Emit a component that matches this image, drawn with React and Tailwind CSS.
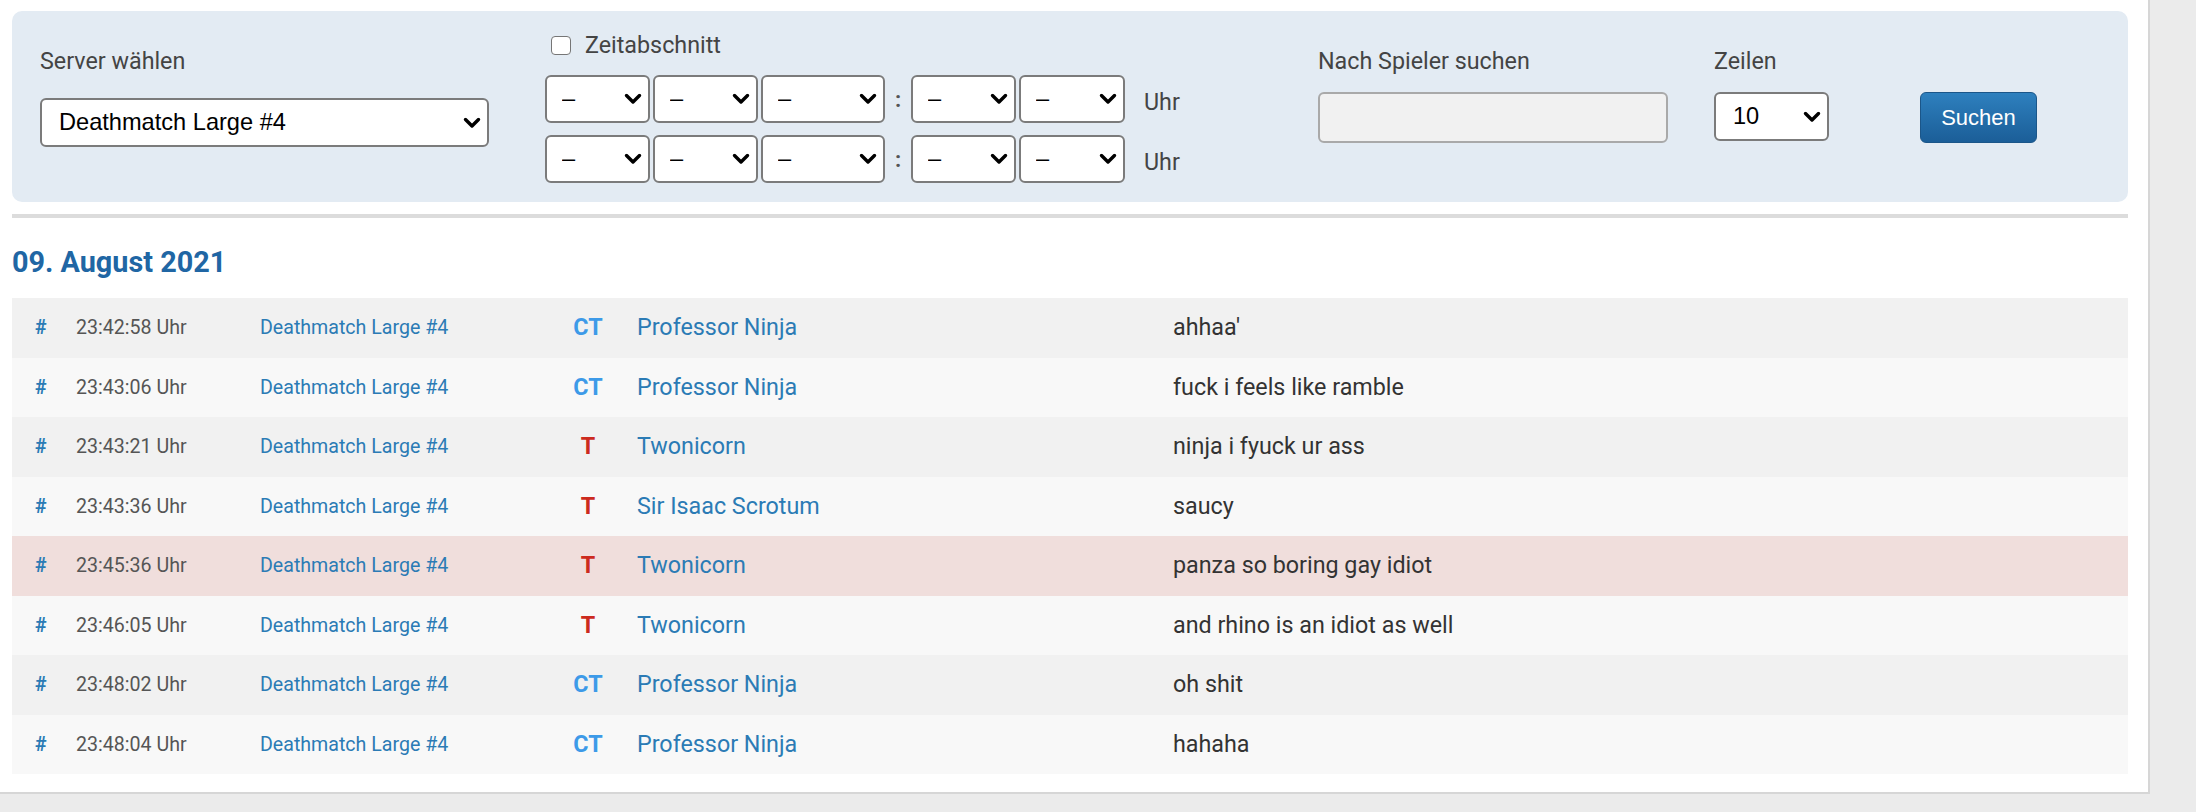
import React from "react";

const Chevron = () => (
  <svg
    className="pointer-events-none absolute right-[8px] top-1/2 -translate-y-1/2"
    width="18"
    height="11"
    viewBox="0 0 18 11"
  >
    <polyline
      points="2.5,2 9,8.5 15.5,2"
      fill="none"
      stroke="#000"
      strokeWidth="3.4"
      strokeLinecap="round"
      strokeLinejoin="round"
    />
  </svg>
);

function Select({ className, selClass, value, options }) {
  return (
    <div className={"relative " + className}>
      <select
        defaultValue={value}
        className={
          "h-full w-full appearance-none rounded-[6px] border-2 border-[#7b7b7b] bg-white pr-[30px] text-[23.6px] text-black outline-none font-['Liberation_Sans',Arial,sans-serif] " +
          selClass
        }
      >
        {options.map((o) => (
          <option key={o}>{o}</option>
        ))}
      </select>
      <Chevron />
    </div>
  );
}

function TimeRow() {
  const dash = ["–"];
  return (
    <div className="flex h-[48px] items-center">
      <Select className="h-full w-[105px]" selClass="pl-[15px]" value="–" options={dash} />
      <Select className="ml-[3px] h-full w-[105px]" selClass="pl-[15px]" value="–" options={dash} />
      <Select className="ml-[3px] h-full w-[124px]" selClass="pl-[15px]" value="–" options={dash} />
      <span className="w-[26px] text-center text-[22px] font-bold text-[#555]">:</span>
      <Select className="h-full w-[105px]" selClass="pl-[15px]" value="–" options={dash} />
      <Select className="ml-[3px] h-full w-[106px]" selClass="pl-[15px]" value="–" options={dash} />
      <span className="ml-[19px] pt-[6px] text-[23.3px] text-[#444]">Uhr</span>
    </div>
  );
}

const rows = [
  ["23:42:58", "CT", "Professor Ninja", "ahhaa'"],
  ["23:43:06", "CT", "Professor Ninja", "fuck i feels like ramble"],
  ["23:43:21", "T", "Twonicorn", "ninja i fyuck ur ass"],
  ["23:43:36", "T", "Sir Isaac Scrotum", "saucy"],
  ["23:45:36", "T", "Twonicorn", "panza so boring gay idiot", true],
  ["23:46:05", "T", "Twonicorn", "and rhino is an idiot as well"],
  ["23:48:02", "CT", "Professor Ninja", "oh shit"],
  ["23:48:04", "CT", "Professor Ninja", "hahaha"],
];

export default function App() {
  return (
    <div className="min-h-[812px] w-full bg-[#ebebeb] font-['Roboto',Arial,sans-serif]">
      <div className="w-[2150px] border-b-2 border-r-2 border-[#d6d6d6] bg-white pb-[18px] pl-[12px] pr-[20px] pt-[11px]">
        {/* Filter panel */}
        <div className="flex h-[191px] items-start rounded-[10px] bg-[#e3ebf3] pl-[28px]">
          <div className="w-[449px] pt-[36px]">
            <div className="text-[23.3px] leading-[28px] text-[#444]">Server wählen</div>
            <Select
              className="mt-[23px] h-[49px] w-full"
              selClass="pl-[17px]"
              value="Deathmatch Large #4"
              options={["Deathmatch Large #4"]}
            />
          </div>

          <div className="ml-[56px] w-[773px] pt-[20px]">
            <div className="flex h-[28px] items-center">
              <input
                type="checkbox"
                className="ml-[6px] h-[19px] w-[20px] appearance-none rounded-[4px] border-[1.5px] border-[#767676] bg-white"
              />
              <span className="ml-[14px] text-[23.3px] leading-[28px] text-[#444]">Zeitabschnitt</span>
            </div>
            <div className="mt-[16px] flex flex-col gap-[12px]">
              <TimeRow />
              <TimeRow />
            </div>
          </div>

          <div className="w-[396px] pt-[36px]">
            <div className="text-[23.3px] leading-[28px] text-[#444]">Nach Spieler suchen</div>
            <input
              type="text"
              className="mt-[17px] h-[51px] w-[350px] rounded-[6px] border-2 border-[#a9a9a9] bg-[#f1f1f1] outline-none"
            />
          </div>

          <div className="w-[206px] pt-[36px]">
            <div className="text-[23.3px] leading-[28px] text-[#444]">Zeilen</div>
            <Select
              className="mt-[17px] h-[49px] w-[115px]"
              selClass="pl-[17px]"
              value="10"
              options={["10", "25", "50"]}
            />
          </div>

          <div className="pt-[81px]">
            <button className="h-[51px] w-[117px] rounded-[6px] border border-[#1b5689] bg-gradient-to-b from-[#2e80be] to-[#1b5e98] text-[22px] text-white font-['Liberation_Sans',Arial,sans-serif]">
              Suchen
            </button>
          </div>
        </div>

        {/* Separator */}
        <div className="mt-[12px] h-[4px] bg-[#dcdcdc]" />

        {/* Heading */}
        <h2 className="mb-[19px] mt-[27px] text-[28.8px] font-bold leading-[34px] text-[#2066a4]">
          09. August 2021
        </h2>

        {/* Rows */}
        <div className="flex flex-col">
          {rows.map(([time, team, player, msg, hl], i) => (
            <div
              key={i}
              className={
                "flex h-[59.5px] items-center " +
                (hl ? "bg-[#f0dedc]" : i % 2 === 0 ? "bg-[#f1f1f1]" : "bg-[#f8f8f8]")
              }
            >
              <div className="w-[64px] pl-[23px] text-[19.6px] font-bold text-[#2b7bb5]">#</div>
              <div className="w-[184px] text-[19.6px] text-[#555]">{time} Uhr</div>
              <div className="w-[300px] text-[19.6px] text-[#2b7bb5]">Deathmatch Large #4</div>
              <div
                className={
                  "w-[56px] text-center text-[23.3px] font-bold " +
                  (team === "CT" ? "text-[#3d9ae8]" : "text-[#cc2a1e]")
                }
              >
                {team}
              </div>
              <div className="w-[557px] pl-[21px] text-[23.3px] text-[#2b7bb5]">{player}</div>
              <div className="flex-1 text-[23.3px] text-[#333]">{msg}</div>
            </div>
          ))}
        </div>
      </div>
    </div>
  );
}
